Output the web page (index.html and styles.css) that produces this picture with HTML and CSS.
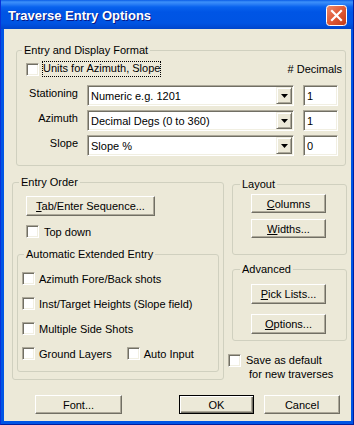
FILE: index.html
```html
<!DOCTYPE html>
<html lang="en">
<head>
  <meta charset="UTF-8" />
  <title>Traverse Entry Options</title>
  <link rel="stylesheet" href="styles.css">
</head>
<body>

<div class="window">
  <div class="titlebar">
    <span class="title">Traverse Entry Options</span>
    <span class="close">
      <svg width="21" height="21" viewBox="0 0 21 21">
        <defs>
          <linearGradient id="closeFill" x1="0" y1="0" x2="1" y2="1">
            <stop offset="0" stop-color="#EE8C6E"/>
            <stop offset="0.5" stop-color="#E05A36"/>
            <stop offset="1" stop-color="#C23A18"/>
          </linearGradient>
        </defs>
        <rect x="0.5" y="0.5" width="20" height="20" rx="3" fill="url(#closeFill)" stroke="#fff"/>
        <path d="M6 6 L15 15 M15 6 L6 15" stroke="#fff" stroke-width="2.2" stroke-linecap="square"/>
      </svg>
    </span>
  </div>

  <div class="client">
    <fieldset class="group format">
      <legend>Entry and Display Format</legend>
      <div class="units-row">
        <label class="check units"><input type="checkbox"><span class="focus">Units for Azimuth, Slope</span></label>
        <span>#&nbsp;Decimals</span>
      </div>
      <div class="format-grid">
        <span class="row-label">Stationing</span>
        <div class="combo"><span class="combo-text">Numeric e.g. 1201</span><span class="combo-btn"><svg width="7" height="4"><path d="M0 0 H7 L3.5 4 Z" fill="#000"/></svg></span></div>
        <input class="edit" type="text" value="1">

        <span class="row-label">Azimuth</span>
        <div class="combo"><span class="combo-text">Decimal Degs (0 to 360)</span><span class="combo-btn"><svg width="7" height="4"><path d="M0 0 H7 L3.5 4 Z" fill="#000"/></svg></span></div>
        <input class="edit" type="text" value="1">

        <span class="row-label">Slope</span>
        <div class="combo"><span class="combo-text">Slope %</span><span class="combo-btn"><svg width="7" height="4"><path d="M0 0 H7 L3.5 4 Z" fill="#000"/></svg></span></div>
        <input class="edit" type="text" value="0">
      </div>
    </fieldset>

    <div class="columns">
      <fieldset class="group order">
        <legend>Entry Order</legend>
        <button class="btn seq"><u>T</u>ab/Enter Sequence...</button>
        <label class="check topdown"><input type="checkbox">Top down</label>

        <fieldset class="group auto">
          <legend>Automatic Extended Entry</legend>
          <div class="auto-list">
            <label class="check"><input type="checkbox">Azimuth Fore/Back shots</label>
            <label class="check"><input type="checkbox">Inst/Target Heights (Slope field)</label>
            <label class="check"><input type="checkbox">Multiple Side Shots</label>
            <div class="check-pair">
              <label class="check"><input type="checkbox">Ground Layers</label>
              <label class="check"><input type="checkbox">Auto Input</label>
            </div>
          </div>
        </fieldset>
      </fieldset>

      <div class="side-col">
        <fieldset class="group side layout">
          <legend>Layout</legend>
          <button class="btn side-btn"><u>C</u>olumns</button>
          <button class="btn side-btn"><u>W</u>idths...</button>
        </fieldset>

        <fieldset class="group side advanced">
          <legend>Advanced</legend>
          <button class="btn side-btn"><u>P</u>ick Lists...</button>
          <button class="btn side-btn"><u>O</u>ptions...</button>
        </fieldset>

        <label class="check save">
          <input type="checkbox">
          <span class="save-text">Save as default<br><span class="indent">for new traverses</span></span>
        </label>
      </div>
    </div>

    <div class="footer">
      <button class="btn font-btn">Font...</button>
      <button class="btn ok-btn">OK</button>
      <button class="btn cancel-btn">Cancel</button>
    </div>
  </div>
</div>

</body>
</html>
```

FILE: styles.css
```css
body {
  margin: 0;
  font-family: 'Liberation Sans', Arial, sans-serif;
  font-size: 11px;
  color: #000;
  background: #fff;
}

.window {
  width: 354px;
  height: 425px;
  background: #0055E5;
  display: flex;
  flex-direction: column;
  box-sizing: border-box;
  border-left: 1px solid #0831D9;
  border-right: 1px solid #001EA0;
  border-bottom: 1px solid #001EA0;
}

.titlebar {
  height: 29px;
  flex: none;
  display: flex;
  align-items: center;
  justify-content: space-between;
  padding: 1px 6px 0 7px;
  box-sizing: border-box;
  background: linear-gradient(#0A5CE6 0, #3D91FA 2px, #2C80F6 4px, #0862EE 7px, #0055E5 12px, #0054E3 23px, #004AD5 27px, #0046C8 29px);
}

.title {
  color: #fff;
  font-weight: bold;
  font-size: 13px;
  text-shadow: 1px 1px #0A1883;
}

.close {
  width: 21px;
  height: 21px;
  display: flex;
}

.client {
  flex: 1;
  margin: 0 2px 3px 3px;
  background: #ECE9D8;
  padding: 15px 0 0 0;
}

/* group boxes */
.group {
  margin: 0;
  padding: 0;
  border: 1px solid #D0D0BF;
  border-radius: 3px;
  min-width: 0;
}

.group legend {
  padding: 0 2px;
  margin-left: 6px;
  line-height: 13px;
}

.format {
  width: 330px;
  box-sizing: border-box;
  margin-left: 12px;
  padding-bottom: 9px;
}

.format legend {
  margin-left: 5px;
}

.units-row {
  display: flex;
  justify-content: space-between;
  align-items: center;
  height: 16px;
  margin-top: 4px;
  padding: 0 3px 0 9px;
}

.format-grid {
  display: grid;
  grid-template-columns: 62px 208px 35px;
  column-gap: 8px;
  row-gap: 4px;
  margin-top: 8px;
}

.format-grid .combo {
  margin-right: 1px;
}

.row-label {
  text-align: right;
  padding-top: 2px;
  line-height: 13px;
  padding-right: 1px;
}

/* checkboxes */
.check {
  display: flex;
  align-items: center;
  gap: 4px;
  height: 15px;
}

.check input {
  appearance: none;
  width: 13px;
  height: 13px;
  margin: 0;
  flex: none;
  box-sizing: border-box;
  background: #fff;
  border: 1px solid;
  border-color: #ACA899 #fff #fff #ACA899;
  box-shadow: inset 1px 1px #716F64, inset -1px -1px #F1EFE2;
}

.units {
  gap: 3px;
  height: 16px;
}

.focus {
  padding: 1px 1px 2px 1px;
  outline: 1px dotted #000;
  outline-offset: -1px;
  line-height: 13px;
}

/* sunken fields */
.combo,
.edit {
  height: 21px;
  box-sizing: border-box;
  background: #fff;
  border: 1px solid;
  border-color: #ACA899 #fff #fff #ACA899;
  box-shadow: inset 1px 1px #716F64, inset -1px -1px #F1EFE2;
}

.combo {
  display: flex;
  align-items: center;
  justify-content: space-between;
  padding: 1px 1px 1px 3px;
}

.combo-btn {
  width: 16px;
  height: 17px;
  box-sizing: border-box;
  display: flex;
  align-items: center;
  justify-content: center;
  padding-top: 1px;
  background: #ECE9D8;
  border: 1px solid;
  border-color: #F1EFE2 #716F64 #716F64 #F1EFE2;
  box-shadow: inset 1px 1px #fff, inset -1px -1px #ACA899;
}

.edit {
  width: 35px;
  margin: 0;
  padding: 0 0 0 3px;
  font: inherit;
  color: #000;
  outline: none;
}

/* buttons */
.btn {
  font: inherit;
  color: #000;
  height: 19px;
  padding: 0;
  margin: 0;
  box-sizing: border-box;
  background: #ECE9D8;
  border: 1px solid;
  border-color: #fff #716F64 #716F64 #fff;
  box-shadow: inset -1px -1px #ACA899;
}

.btn u {
  text-decoration-thickness: 1px;
  text-underline-offset: 1px;
}

/* two columns */
.columns {
  display: flex;
  gap: 4px;
  margin: 10px 0 0 8px;
  align-items: flex-start;
}

.order {
  width: 212px;
  box-sizing: border-box;
  padding-bottom: 7px;
  display: flex;
  flex-direction: column;
  align-items: flex-start;
}

.seq {
  width: 129px;
  height: 20px;
  margin: 7px 0 0 13px;
}

.topdown {
  margin: 8px 0 0 13px;
  gap: 5px;
}

.auto {
  align-self: stretch;
  margin: 9px 4px 0 4px;
  padding-bottom: 10px;
}

.auto-list {
  display: flex;
  flex-direction: column;
  gap: 10px;
  margin-top: 10px;
  padding-left: 4px;
}

.check-pair {
  display: flex;
  gap: 15px;
}

.side-col {
  width: 118px;
  margin-top: 2px;
  display: flex;
  flex-direction: column;
}

.side {
  margin-left: 4px;
  width: 115px;
  box-sizing: border-box;
  display: flex;
  flex-direction: column;
  align-items: flex-start;
}

.side legend {
  margin-left: 7px;
}

.side-btn {
  width: 75px;
  margin-left: 18px;
}

.layout {
  padding-bottom: 16px;
}

.layout .side-btn:first-of-type {
  margin-top: 3px;
}

.layout .side-btn + .side-btn {
  margin-top: 6px;
}

.advanced {
  margin-top: 8px;
  padding-bottom: 6px;
}

.advanced .side-btn {
  height: 20px;
}

.advanced .side-btn:first-of-type {
  margin-top: 8px;
}

.advanced .side-btn + .side-btn {
  margin-top: 10px;
}

.save {
  margin-top: 12px;
  height: auto;
  align-items: flex-start;
  gap: 5px;
}

.save input {
  margin-top: 1px;
}

.save-text {
  line-height: 14px;
}

.indent {
  padding-left: 3px;
}

/* bottom buttons */
.footer {
  display: flex;
  margin: 14px 0 0 31px;
}

.font-btn {
  width: 87px;
}

.ok-btn {
  width: 75px;
  margin-left: 57px;
  border-color: #000;
  box-shadow: inset 1px 1px #fff, inset -1px -1px #716F64, inset -2px -2px #ACA899;
}

.cancel-btn {
  width: 76px;
  margin-left: 10px;
}
```
